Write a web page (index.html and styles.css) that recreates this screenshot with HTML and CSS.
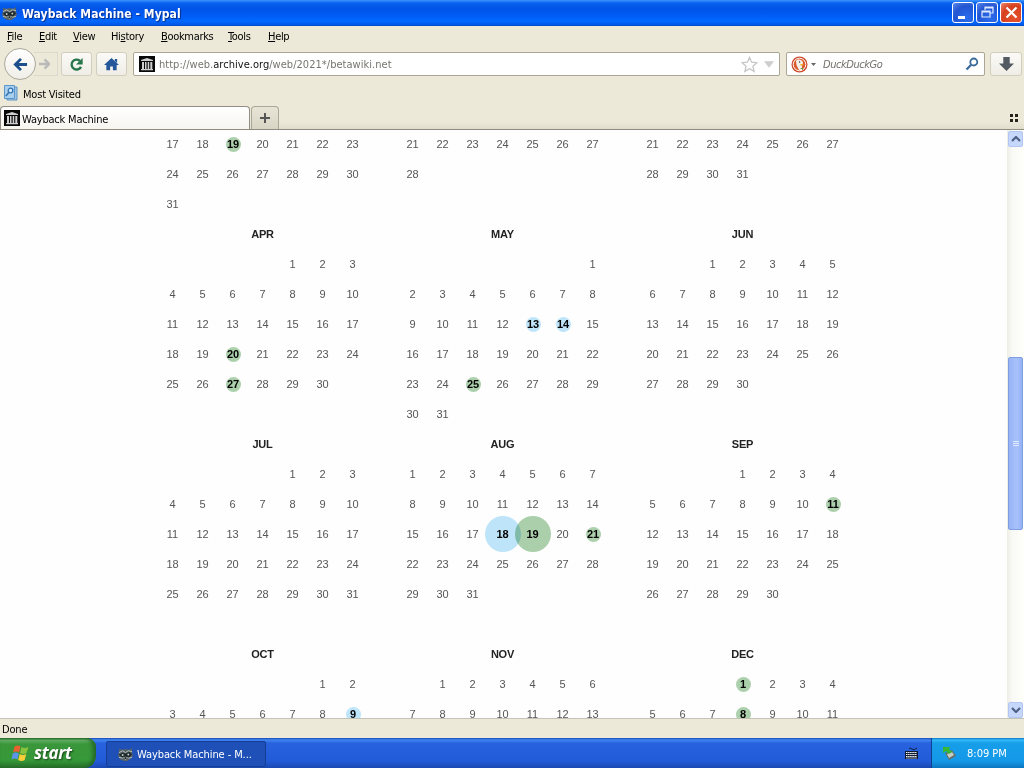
FILE: index.html
```html
<!DOCTYPE html>
<html lang="en">
<head>
<meta charset="utf-8">
<title>Wayback Machine - Mypal</title>
<link rel="stylesheet" href="styles.css">
</head>
<body>
<svg class="defs" width="0" height="0" aria-hidden="true">
  <symbol id="raccoon" viewBox="0 0 16 16">
    <path d="M1 2l4 1 3-1 4 1 3-2v5l1 3-2 3-4 3H6l-4-2-2-4 1-3z" fill="#566266"/>
    <path d="M1 8l4-2 3 1 4-2 3 3-3 3-4-1-4 1z" fill="#1d292d"/>
    <path d="M1 6l4-2 3 2 3-2 4 1M1 11l4 1M15 11l-4 1" fill="none" stroke="#b9c0ba"/>
    <circle cx="5" cy="8.500" r="1" fill="#cdd4ce"/><circle cx="11" cy="8" r="1" fill="#cdd4ce"/>
    <path d="M5.500 11h5L8 14z" fill="#bac1bb"/><path d="M7 11h2v2H7z" fill="#161e20"/>
  </symbol>
  <symbol id="archive" viewBox="0 0 16 16">
    <path d="M0 0h16v16H0z" fill="#080808"/>
    <path d="M2 4l6-2 6 2v1H2zM3 6h2v7H3zM6 6h1.500v7H6zM8.700 6h1.500v7H8.700zM11.300 6h2v7h-2zM2 13h12v1.200H2z" fill="#cfcfcf"/>
  </symbol>
</svg>
<div class="screen">
  <header class="titlebar">
    <svg class="app-icon"><use href="#raccoon"/></svg>
    <h1 class="title">Wayback Machine - Mypal</h1>
    <div class="controls">
      <span class="control"><svg viewBox="0 0 19 19"><path d="M4 13h7v3H4z" fill="#fff"/></svg></span>
      <span class="control"><svg viewBox="0 0 19 19"><path d="M7 7V4h8v6h-3M7 5h8M4 8h8v6H4zM4 9h8" fill="none" stroke="#dfe9ff" stroke-width="1.200"/></svg></span>
      <span class="control close"><svg viewBox="0 0 19 19"><path d="M4.500 4.500l10 10M14.500 4.500l-10 10" stroke="#fff" stroke-width="2.200"/></svg></span>
    </div>
  </header>
  <nav class="menubar">
    <span class="m-file"><u>F</u>ile</span><span class="m-edit"><u>E</u>dit</span><span class="m-view"><u>V</u>iew</span><span class="m-history">Hi<u>s</u>tory</span><span class="m-bookmarks"><u>B</u>ookmarks</span><span class="m-tools"><u>T</u>ools</span><span class="m-help"><u>H</u>elp</span>
  </nav>
  <div class="navbar">
    <span class="back"><svg viewBox="0 0 16 16"><path d="M8.500 2L2.500 8l6 6M3 8H15" fill="none" stroke="#1c4f8b" stroke-width="3"/></svg></span>
    <span class="forward"><svg viewBox="0 0 12 12"><path d="M6 1l5 5-5 5M10 6H0" fill="none" stroke="#b9b9b7" stroke-width="2.500"/></svg></span>
    <span class="tool reload"><svg viewBox="0 0 16 16"><path d="M12.800 10.500A5.300 5.300 0 1 1 11.500 4" fill="none" stroke="#25744a" stroke-width="2.500"/><path d="M14.500 1v7h-7z" fill="#25744a"/></svg></span>
    <span class="tool home"><svg viewBox="0 0 16 16"><path d="M8 1l8 7.500h-2.500V14H9.500v-4h-3v4h-4V8.500H0zM11.500 2h2.500v4l-2.500-2z" fill="#24589a"/></svg></span>
    <div class="field address">
      <svg class="site"><use href="#archive"/></svg>
      <span class="url">http://web.<b>archive.org</b>/web/2021*/betawiki.net</span>
      <svg class="star" viewBox="0 0 18 18"><path d="M9 1.500l2.200 5.100 5.600.5-4.200 3.700 1.300 5.500L9 13.400l-4.900 2.900 1.300-5.500L1.200 7.100l5.600-.5z" fill="#fff" stroke="#c4c4c4" stroke-width="1.300"/></svg>
      <svg class="drop" viewBox="0 0 11 7"><path d="M0 0h11L5.500 7z" fill="#cdcdcd"/></svg>
    </div>
    <div class="field search">
      <svg class="duck" viewBox="0 0 17 17"><circle cx="8.500" cy="8.500" r="8" fill="#cc4528"/><circle cx="8.500" cy="8.500" r="6.300" fill="#db5a2c" stroke="#fff"/><path d="M5 5c2-3 7-1 7 2l-1 3 0 4-3 0L5.500 9z" fill="#f6f1e8"/><path d="M9 8l4 0-3 2z" fill="#efb52e"/><path d="M9 12l3 0v2z" fill="#56963d"/><circle cx="8.600" cy="6" r=".7" fill="#234"/></svg>
      <svg class="mini-drop" viewBox="0 0 5 3"><path d="M0 0h5L2.500 3z" fill="#666"/></svg>
      <em class="engine">DuckDuckGo</em>
      <svg class="lens" viewBox="0 0 14 14"><circle cx="8.800" cy="5" r="3.500" fill="none" stroke="#3b6b9c" stroke-width="1.800"/><path d="M6.200 7.800L1.500 12.500" stroke="#3b6b9c" stroke-width="2.300"/></svg>
    </div>
    <span class="tool download"><svg viewBox="0 0 14 14"><path d="M4 0h6v6h4l-7 7-7-7h4z" fill="#535a61"/></svg></span>
  </div>
  <div class="bookmarks">
    <svg class="folder" viewBox="0 0 14 16"><path d="M3 2h10v13H3z" fill="#9dc4e6" stroke="#5d94c4"/><path d="M.5.500h10v13H.5z" fill="#a9cfee" stroke="#5b96ca"/><circle cx="6.500" cy="5.500" r="2.300" fill="#d6ebfb" stroke="#3275b2" stroke-width="1.300"/><path d="M4.800 7.500l-3 3.500" stroke="#3275b2" stroke-width="1.600"/></svg>
    <span class="most">Most Visited</span>
  </div>
  <div class="tabs">
    <div class="tab"><svg class="tab-icon"><use href="#archive"/></svg><span class="tab-name">Wayback Machine</span></div>
    <span class="newtab"><svg viewBox="0 0 10 10"><path d="M5 0v10M0 5h10" stroke="#555" stroke-width="2"/></svg></span>
    <svg class="groups" viewBox="0 0 8 8"><path d="M0 0h3v3H0zM5 0h3v3H5zM0 5h3v3H0zM5 5h3v3H5z" fill="#26221c"/></svg>
  </div>
  <main class="viewport">
    <div class="page"><div class="calendar" id="calendar"></div></div>
    <div class="scrollbar">
      <span class="arrow"><svg viewBox="0 0 10 6"><path d="M1 5l4-4 4 4" fill="none" stroke="#4d6185" stroke-width="2.200"/></svg></span>
      <span class="space-above"></span>
      <span class="thumb"><i></i><i></i><i></i></span>
      <span class="space-below"></span>
      <span class="arrow"><svg viewBox="0 0 10 6"><path d="M1 1l4 4 4-4" fill="none" stroke="#4d6185" stroke-width="2.200"/></svg></span>
    </div>
  </main>
  <div class="status"><span class="done">Done</span></div>
  <footer class="taskbar">
    <div class="start">
      <svg class="flag" viewBox="0 0 18 18"><path d="M3.500 2.500q3-2 6 0L8 8.500q-3-2-6 0z" fill="#e9612e"/><path d="M10.500 3q3 2 7 0l-2 6q-3 2-6.500 0z" fill="#87c33e"/><path d="M1.800 9.500q3-2 6 0l-1.300 6q-3-2-6 0z" fill="#5c94e9"/><path d="M8.700 10q3 2 6.500 0l-1.500 6q-3 2-6.500 0z" fill="#f8ce38"/></svg>
      <span class="start-label">start</span>
    </div>
    <div class="task"><svg class="app-icon"><use href="#raccoon"/></svg><span class="task-name">Wayback Machine - M...</span></div>
    <svg class="keyboard" viewBox="0 0 13 12"><path d="M4 2q1-2 3 0t5-1" fill="none" stroke="#102044"/><path d="M0 4h13v8H0z" fill="#111a30"/><path d="M1 5.500h11M1 7.500h11M1 9.500h11" stroke="#fff" stroke-dasharray="1.500 .6"/><path d="M1 11h11" stroke="#fff" stroke-width=".6"/></svg>
    <div class="tray">
      <svg class="device" viewBox="0 0 14 14"><path d="M3 7l7-3 4 6-7 4z" fill="#65716a"/><path d="M5 8l5-2 2 3-5 3z" fill="#c7cec7"/><path d="M1 1l7 0-1 2 3 3-3 2-3-3-3 2z" fill="#36b832"/></svg>
      <span class="clock">8:09 PM</span>
    </div>
  </footer>
</div>
<script src="calendar.js"></script>
</body>
</html>
```
FILE: styles.css
```css
* { box-sizing: border-box; }
body { margin: 0; overflow: hidden; }
svg { display: block; flex: none; }
.defs { position: absolute; }
.screen { width: 1024px; height: 768px; display: flex; flex-direction: column; background: #ece9d8; font: 11px/14px "DejaVu Sans Condensed", "DejaVu Sans", sans-serif; color: #000; white-space: nowrap; }
.screen > * { flex: none; }

.titlebar { height: 26px; display: flex; align-items: center; padding: 0 2px 0 2px; background: linear-gradient(#3d95ff 0, #0a62ee 3px, #0054e6 8px, #0059f2 14px, #0068ff 21px, #0057e5 25px, #0042bc); }
.app-icon { width: 15px; height: 15px; }
.title { margin: 0; padding: 1px 0 0 5px; font: bold 12px/16px "DejaVu Sans Condensed", sans-serif; letter-spacing: .07px; color: #fff; text-shadow: 1px 1px 1px #0b2c87; flex: 1; }
.controls { display: flex; gap: 2px; margin-top: -1px; }
.control { width: 22px; height: 21px; border: 1px solid #fff; border-radius: 3px; display: grid; place-items: center; background: radial-gradient(circle at 70% 80%, #2a6dee, #2456d2 60%, #5989ec); }
.control svg { width: 19px; height: 19px; }
.close { background: radial-gradient(circle at 70% 80%, #e5532f, #d7401f 60%, #e98a6f); }

.menubar { height: 21px; display: flex; align-items: center; padding-left: 7px; font-size: 11px; }
.m-file { width: 32px; } .m-edit { width: 34px; } .m-view { width: 38px; } .m-history { width: 50px; } .m-bookmarks { width: 67px; } .m-tools { width: 40px; }
.menubar { letter-spacing: -.32px; }
.most, .tab-name { letter-spacing: -.2px; }

.navbar { height: 34px; display: flex; align-items: center; padding-left: 4px; }
.back { width: 32px; height: 32px; border: 1px solid #aaa89e; border-radius: 50%; display: grid; place-items: center; background: linear-gradient(#fff, #f0eee7); z-index: 1; }
.back svg { width: 15px; height: 15px; }
.forward { width: 24px; height: 24px; margin-left: -2px; border: 1px solid #dcd9ce; border-left: 0; display: flex; align-items: center; padding-left: 5px; }
.forward svg { width: 11px; height: 12px; }
.tool { width: 31px; height: 24px; border: 1px solid #d1cebf; border-radius: 3px; display: grid; place-items: center; background: linear-gradient(#fbfaf7, #efede5); }
.tool svg { width: 15px; height: 15px; }
.reload { margin-left: 3px; }
.home { margin-left: 4px; }
.field { height: 24px; border: 1px solid #aaa594; border-radius: 2px; background: #fff; display: flex; align-items: center; }
.address { width: 647px; margin-left: 6px; padding-left: 5px; }
.site { width: 16px; height: 16px; }
.url { width: 587px; padding: 2px 0 0 4px; color: #77756f; letter-spacing: .03px; }
.url b { font-weight: normal; color: #111; }
.star { width: 17px; height: 17px; margin-left: -1px; }
.drop { width: 10px; height: 7px; margin-left: 6px; }
.search { width: 199px; margin-left: 6px; padding-left: 4px; }
.duck { width: 17px; height: 17px; }
.mini-drop { width: 5px; height: 3px; margin-left: 3px; }
.engine { width: 144px; padding: 2px 0 0 7px; color: #74716b; letter-spacing: -.45px; }
.lens { width: 14px; height: 14px; margin-left: 5px; }
.download { margin-left: 5px; width: 32px; }

.bookmarks { height: 24px; display: flex; align-items: center; padding-left: 4px; }
.folder { width: 14px; height: 16px; margin-top: -1px; }
.most { padding: 4px 0 0 5px; }
.tabs { height: 25px; display: flex; align-items: flex-end; border-bottom: 1px solid #8f8d82; background: linear-gradient(#ece9d8 70%, #e0ddcd); }
.tab { width: 250px; height: 23px; border: 1px solid #918f85; border-bottom: 0; border-radius: 4px 4px 0 0; display: flex; align-items: center; padding-left: 3px; background: linear-gradient(#fff, #f6f5f0); }
.tab-icon { width: 16px; height: 16px; }
.tab-name { padding: 3px 0 0 2px; }
.newtab { width: 28px; height: 23px; margin-left: 1px; border: 1px solid #aaa798; border-bottom: 0; border-radius: 4px 4px 0 0; display: grid; place-items: center; background: linear-gradient(#e8e5d7, #d8d5c5); }
.newtab svg { width: 10px; height: 10px; }
.groups { width: 8px; height: 8px; margin: 0 6px 7px auto; }

.viewport { height: 588px; display: flex; background: #fefefe; }
.page { width: 1007px; overflow: hidden; }
.calendar { display: grid; grid-template-columns: repeat(3, 210px); grid-template-rows: 90px repeat(3, 210px); column-gap: 30px; margin: -1px 0 0 157.5px; font: 11px/30px "Liberation Sans", Arial, sans-serif; color: #555; text-align: center; }
.month-name { height: 30px; font-weight: bold; letter-spacing: -.2px; color: #222; }
.days { display: grid; grid-template-columns: repeat(7, 30px); grid-auto-rows: 30px; }
.day { display: grid; place-items: center; }
.mark { width: 15px; height: 15px; line-height: 15px; margin-left: 1px; border-radius: 50%; font-weight: bold; color: #000; }
.green { background: #acd0ac; }
.blue { background: #bfe5fa; }
.large { width: 36px; height: 36px; line-height: 36px; margin: -3px; mix-blend-mode: multiply; }

.scrollbar { width: 17px; display: flex; flex-direction: column; padding: 1px 1px 0; background: linear-gradient(90deg, #eeede5, #f9f9f5 30%, #fefefb); }
.arrow { height: 16px; border: 1px solid #b1c6f3; border-radius: 2px; display: grid; place-items: center; background: #c7d7fc; }
.arrow svg { width: 10px; height: 6px; }
.space-above { height: 210px; }
.thumb { height: 173px; border: 1px solid #809fe3; border-radius: 2px; background: linear-gradient(90deg, #98b3f5, #a9c2fc 60%, #94b1f4); display: flex; flex-direction: column; justify-content: center; align-items: center; gap: 1px; }
.thumb i { width: 6px; height: 1px; background: #deebff; }
.space-below { height: 172px; }
.status { height: 20px; border-top: 1px solid #c5c2b6; padding: 4px 0 0 2px; letter-spacing: -.15px; }

.taskbar { height: 30px; display: flex; align-items: center; background: linear-gradient(#1c48b2 0, #3f87f1 2px, #2862de 5px, #225bd8 23px, #1c49b2); color: #fff; }
.start { width: 96px; height: 30px; border-radius: 0 9px 12px 0; display: flex; align-items: center; padding-left: 11px; background: linear-gradient(#276627 0, #69b669 2px, #3a963b 6px, #369938 22px, #267029); box-shadow: inset -3px 0 4px #236527; }
.flag { width: 18px; height: 18px; }
.start-label { padding-left: 5px; font: italic bold 17px/20px "Open Sans", sans-serif; letter-spacing: -.3px; text-shadow: 1px 1px 2px #194019; }
.task { width: 160px; height: 26px; margin: 2px 0 0 10px; display: flex; align-items: center; padding-left: 11px; border: 1px solid #163d94; border-radius: 2px; background: #1e50b7; }
.task-name { padding: 1px 0 0 4px; letter-spacing: -.1px; }
.keyboard { width: 13px; height: 12px; margin-left: 639px; }
.tray { width: 93px; height: 30px; margin-left: auto; display: flex; align-items: center; padding-left: 10px; border-left: 1px solid #113f91; background: linear-gradient(#0f75c8 0, #33baf8 2px, #179ee9 5px, #1399e8 23px, #0d76c0); }
.device { width: 14px; height: 14px; }
.clock { padding: 1px 0 0 11px; }
```
FILE: calendar.js
```js
// offset: empty cells before the first listed day.
const months = [
  { from: 17, to: 31, offset: 0, marks: { 19: "green" } },
  { from: 21, to: 28, offset: 0 },
  { from: 21, to: 31, offset: 0 },
  { name: "APR", to: 30, offset: 4, marks: { 20: "green", 27: "green" } },
  { name: "MAY", to: 31, offset: 6, marks: { 13: "blue", 14: "blue", 25: "green" } },
  { name: "JUN", to: 30, offset: 2 },
  { name: "JUL", to: 31, offset: 4 },
  { name: "AUG", to: 31, offset: 0, marks: { 18: "blue large", 19: "green large", 21: "green" } },
  { name: "SEP", to: 30, offset: 3, marks: { 11: "green" } },
  { name: "OCT", to: 9, offset: 5, marks: { 9: "blue" } },
  { name: "NOV", to: 13, offset: 1 },
  { name: "DEC", to: 11, offset: 3, marks: { 1: "green", 8: "green" } }
];

const calendar = document.getElementById("calendar");
for (const { name, from = 1, to, offset, marks = {} } of months) {
  const month = document.createElement("section");
  if (name) {
    const heading = document.createElement("div");
    heading.className = "month-name";
    heading.textContent = name;
    month.append(heading);
  }
  const days = document.createElement("div");
  days.className = "days";
  for (let i = 0; i < offset; i++) days.append(document.createElement("span"));
  for (let d = from; d <= to; d++) {
    const day = document.createElement("span");
    day.className = "day";
    if (marks[d]) {
      const mark = document.createElement("span");
      mark.className = "mark " + marks[d];
      mark.textContent = d;
      day.append(mark);
    } else {
      day.textContent = d;
    }
    days.append(day);
  }
  month.append(days);
  calendar.append(month);
}
```
